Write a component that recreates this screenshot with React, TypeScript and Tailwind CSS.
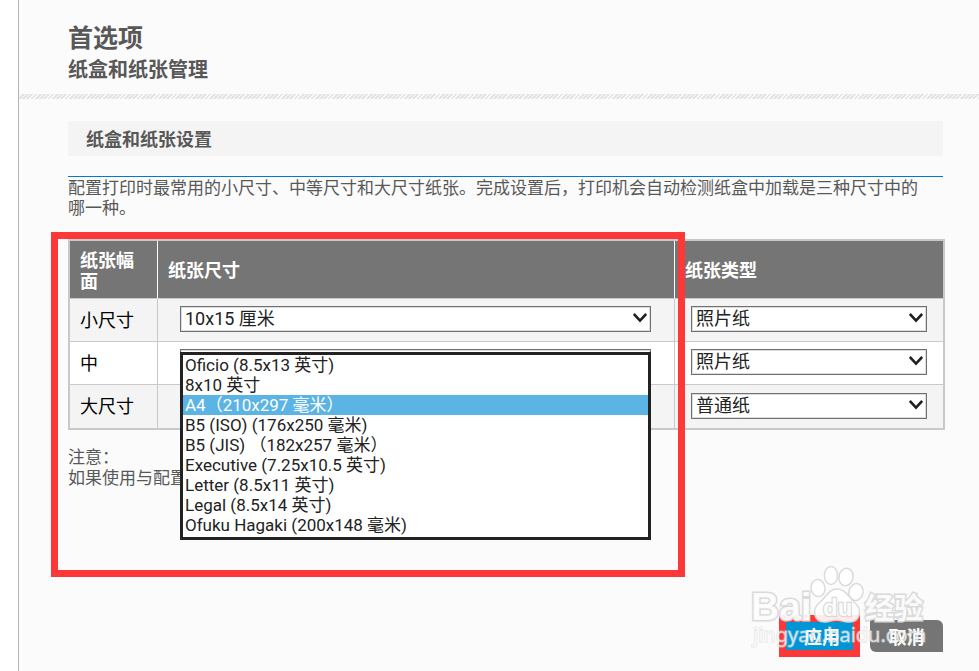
import type { ReactNode } from "react";

const paperSizes = [
  "Oficio (8.5x13 英寸)",
  "8x10 英寸",
  "A4（210x297 毫米）",
  "B5 (ISO) (176x250 毫米)",
  "B5 (JIS) （182x257 毫米）",
  "Executive (7.25x10.5 英寸)",
  "Letter (8.5x11 英寸)",
  "Legal (8.5x14 英寸)",
  "Ofuku Hagaki (200x148 毫米)",
];

const rows = [
  { id: "small", label: "小尺寸", size: "10x15 厘米", type: "照片纸" },
  { id: "medium", label: "中", size: "", type: "照片纸", open: true },
  { id: "large", label: "大尺寸", size: "", type: "普通纸" },
];

const Select = ({ label, value, children }: { label: string; value: string; children?: ReactNode }) => (
  <div className="relative">
    <select
      aria-label={label}
      defaultValue={value}
      className="block h-[26px] w-full appearance-none border border-[#707070] bg-white pl-1 pr-6 font-[Roboto,'Noto_Sans_CJK_SC',sans-serif] text-lg leading-6 text-[#222] shadow-[inset_0_0_0_1px_#dcdcdc]"
    >
      <option>{value}</option>
    </select>
    <svg
      className="pointer-events-none absolute right-1 top-[7px] h-[10px] w-[14px]"
      viewBox="0 0 14 10"
      fill="none"
      stroke="#1e2024"
      strokeWidth="2.6"
    >
      <path d="M0.8 1 L7 7.6 L13.2 1" />
    </svg>
    {children}
  </div>
);

const SizeList = () => (
  <ul
    role="listbox"
    aria-label="纸张尺寸"
    className="absolute inset-x-0 top-[3px] z-10 border-3 border-[#222] bg-white pb-[2px] font-[Roboto,'Noto_Sans_CJK_SC',sans-serif] text-[17px] leading-5 text-[#222]"
  >
    {paperSizes.map((size) => (
      <li
        key={size}
        role="option"
        aria-selected={size.startsWith("A4")}
        className="h-5 whitespace-pre pl-[2px] aria-selected:bg-[#5bb4e4] aria-selected:text-white"
      >
        {size}
      </li>
    ))}
  </ul>
);

const PaperTable = () => (
  <table className="w-full table-fixed border-separate border-spacing-0 border-2 border-[#c9c9c9] text-lg leading-[21px] text-black">
    <colgroup>
      <col className="w-[88px]" />
      <col />
      <col className="w-[268px]" />
    </colgroup>
    <thead>
      <tr className="h-[58px] bg-[#757575] text-left text-white">
        <th className="border-b border-r border-b-[#c9c9c9] border-r-white px-[10px]">纸张幅面</th>
        <th className="border-b border-r border-b-[#c9c9c9] border-r-white px-[10px]">纸张尺寸</th>
        <th className="border-b border-b-[#c9c9c9] px-[10px]">纸张类型</th>
      </tr>
    </thead>
    <tbody>
      {rows.map((row) => (
        <tr key={row.id} className="group h-[43px] odd:bg-[#f4f4f4] even:bg-white">
          <td className="border-b border-r border-[#c9c9c9] px-[10px] pb-[2px] group-last:border-b-0">{row.label}</td>
          <td className="border-b border-r border-[#c9c9c9] pb-[2px] pl-[22px] pr-[23px] group-last:border-b-0">
            <Select label={`${row.label} 纸张尺寸`} value={row.size}>
              {row.open && <SizeList />}
            </Select>
          </td>
          <td className="border-b border-[#c9c9c9] px-4 pb-[2px] group-last:border-b-0">
            <Select label={`${row.label} 纸张类型`} value={row.type} />
          </td>
        </tr>
      ))}
    </tbody>
  </table>
);

const Watermark = () => (
  <svg
    className="pointer-events-none absolute -top-[52px] right-[14px] h-[90px] w-[182px]"
    viewBox="0 0 182 90"
    fontFamily="'Liberation Sans', 'Noto Sans CJK SC', sans-serif"
  >
    <g fill="#ffffff" stroke="#dadada" strokeWidth="1.5" fillOpacity="0.9">
      <ellipse cx="71" cy="25" rx="7" ry="8.5" transform="rotate(-10 71 25)" />
      <ellipse cx="84" cy="12.5" rx="6.6" ry="9" />
      <ellipse cx="99" cy="14" rx="7" ry="8.8" transform="rotate(12 99 14)" />
      <ellipse cx="109" cy="29" rx="7" ry="8.5" transform="rotate(14 109 29)" />
      <path d="M90 26 C99 26 102 35 108 40 C115 46 114 59 102 59 C96 59 94 57 90 57 C85 57 82 59 78 59 C66 59 65 46 72 40 C79 35 81 26 90 26 Z" />
      <g fontWeight="bold" strokeWidth="3" paintOrder="stroke">
        <text x="4" y="57" fontSize="39">
          Bai
        </text>
        <text x="118" y="56" fontSize="29">
          经验
        </text>
      </g>
      <text x="76" y="53" fontSize="24" fontWeight="bold" strokeWidth="2.4" paintOrder="stroke">
        du
      </text>
    </g>
    <text
      x="6"
      y="79"
      fontSize="20"
      fontWeight="normal"
      fontFamily="'Noto Sans', sans-serif"
      fill="#ffffff"
      fillOpacity="0.7"
      stroke="#d0d0d0"
      strokeOpacity="0.45"
      strokeWidth="1.6"
      paintOrder="stroke"
    >
      jingyan.baidu.com
    </text>
  </svg>
);

const App = () => {
  return (
    <div className="flex min-h-screen bg-white pl-[18px] font-['Noto_Sans_CJK_SC',sans-serif] text-[#585858]">
      <main className="flex-1 border-l border-[#b4b4b4] bg-[#fbfbfb]">
        <header className="pl-[49px] pt-5 font-bold">
          <h1 className="text-[25px] leading-8">首选项</h1>
          <h2 className="text-xl leading-[34px]">纸盒和纸张管理</h2>
        </header>
        <div className="mt-2 h-[5px] bg-[repeating-linear-gradient(-45deg,#e4e4e4_0_2px,transparent_2px_3px)]" />

        <div className="ml-[49px] mr-9 mt-[22px]">
          <h3 className="bg-[#f4f4f4] pl-[18px] text-lg font-bold leading-[35px]">纸盒和纸张设置</h3>
          <p className="mt-5 border-t border-[#0079ce] text-[17px] leading-5">
            配置打印时最常用的小尺寸、中等尺寸和大尺寸纸张。完成设置后，打印机会自动检测纸盒中加载是三种尺寸中的
            <br />
            哪一种。
          </p>

          <section className="relative -mr-[2px] mt-[22px]">
            <PaperTable />
            <div className="mt-[15px] text-[17px] leading-[21px]">
              <p>注意：</p>
              <p>如果使用与配置</p>
            </div>
            <div className="pointer-events-none absolute -left-[17px] -top-[7px] right-[260px] h-[345px] border-7 border-[#fc3838]" />
          </section>

          <div className="relative mt-32 flex items-center justify-end gap-[10px] pb-[14px] text-lg font-bold text-white">
            <button type="button" className="h-[42px] w-[81px] border-7 border-[#fc3838] bg-[#0096d6] pl-[5px] leading-7">
              应用
            </button>
            <button type="button" className="h-8 w-[73px] rounded-bl-md rounded-tr-md bg-[#757575] leading-8">
              取消
            </button>
            <Watermark />
          </div>
        </div>
      </main>
    </div>
  );
};

export default App;
